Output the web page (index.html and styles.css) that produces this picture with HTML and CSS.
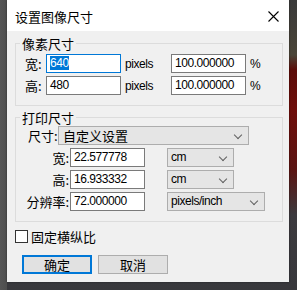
FILE: index.html
```html
<!DOCTYPE html>
<html>
<head>
<meta charset="utf-8">
<title>设置图像尺寸</title>
<link rel="stylesheet" href="styles.css">
</head>
<body>
<div class="scene">
 <div class="dialog">
  <div class="titlebar">
   <span class="title">设置图像尺寸</span>
   <svg class="close" width="11" height="11" viewBox="0 0 11 11"><path d="M0.5 0.5L10.5 10.5M10.5 0.5L0.5 10.5" stroke="#000" stroke-width="1.1"/></svg>
  </div>
  <div class="content">
   <fieldset class="group">
    <legend>像素尺寸</legend>
    <div class="row">
     <span class="lab px-lab">宽:</span>
     <div class="field focus w75"><span class="sel">640</span></div>
     <span class="unit">pixels</span>
     <div class="field w75">100.000000</div>
     <span class="pct">%</span>
    </div>
    <div class="row">
     <span class="lab px-lab">高:</span>
     <div class="field w75">480</div>
     <span class="unit">pixels</span>
     <div class="field w75">100.000000</div>
     <span class="pct">%</span>
    </div>
   </fieldset>

   <fieldset class="group print">
    <legend>打印尺寸</legend>
    <div class="row">
     <span class="lab size-lab">尺寸:</span>
     <div class="combo w190">自定义设置<span class="chev"></span></div>
    </div>
    <div class="row">
     <span class="lab pr-lab">宽:</span>
     <div class="field w74">22.577778</div>
     <div class="combo w66 gap">cm<span class="chev"></span></div>
    </div>
    <div class="row">
     <span class="lab pr-lab">高:</span>
     <div class="field w74">16.933332</div>
     <div class="combo w66 gap">cm<span class="chev"></span></div>
    </div>
    <div class="row">
     <span class="lab pr-lab">分辨率:</span>
     <div class="field w74">72.000000</div>
     <div class="combo w97 gap">pixels/inch<span class="chev"></span></div>
    </div>
   </fieldset>

   <label class="check"><span class="box"></span>固定横纵比</label>

   <div class="buttons">
    <div class="btn default">确定</div>
    <div class="btn">取消</div>
   </div>
  </div>
 </div>
</div>
</body>
</html>
```

FILE: styles.css
```css
html, body {
    margin: 0;
    padding: 0;
}
body {
    width: 297px;
    height: 290px;
    overflow: hidden;
    font-family: "Liberation Sans", "Noto Sans CJK SC", sans-serif;
    font-size: 12px;
    letter-spacing: -0.45px;
    color: #000;
    background-color: #3b3b3d;
}
.scene {
    height: 290px;
    padding-left: 7px;
    background:
        linear-gradient(to right, #555555 0, #4e4e4e 7px, transparent 7px),
        linear-gradient(to bottom, #3a3a3a 0, #4a4538 55px, #5a0c08 70px, #6e0d0a 110px, #5a1412 170px, #3c3a3e 215px, #38383c 290px);
}
.dialog {
    width: 282px;
    height: 282px;
    background-color: #f0f0f0;
    box-shadow: 0 0 2px rgba(0, 0, 0, 0.4);
}
.titlebar {
    height: 31px;
    background-color: #fff;
    display: flex;
    align-items: center;
    justify-content: space-between;
    padding: 0 10px 0 8px;
}
.title {
    font-family: "Noto Sans CJK SC", sans-serif;
    font-size: 13px;
    letter-spacing: 0;
    line-height: 14px;
    margin-top: 2px;
}
.close {
    display: block;
    margin-top: 1px;
}
.content {
    padding: 0 6px 0 8px;
}
.group {
    margin: 6px 0 0 0;
    padding: 4px 0 10px 0;
    border: 1px solid #dcdcdc;
    width: 268px;
    box-sizing: border-box;
    display: flex;
    flex-direction: column;
    gap: 3px;
}
.group legend {
    font-family: "Noto Sans CJK SC", sans-serif;
    font-size: 13px;
    letter-spacing: 0;
    line-height: 13px;
    padding: 0 2px;
    margin-left: 4px;
}
.group.print {
    margin-top: 5px;
    padding-top: 2px;
}
.row {
    display: flex;
    align-items: center;
    height: 19px;
}
.lab {
    font-family: "Noto Sans CJK SC", sans-serif;
    font-size: 13px;
    letter-spacing: 0;
    line-height: 19px;
    box-sizing: border-box;
    white-space: nowrap;
}
.px-lab {
    width: 30px;
    padding-left: 9px;
}
.size-lab {
    width: 42px;
    padding-left: 12px;
}
.pr-lab {
    width: 54px;
    text-align: right;
    padding-right: 1px;
}
.field {
    height: 19px;
    box-sizing: border-box;
    border: 1px solid #7a7a7a;
    background-color: #fff;
    padding-left: 3px;
    line-height: 17px;
    white-space: nowrap;
}
.field.focus {
    border-color: #0078d7;
}
.sel {
    background-color: #0078d7;
    color: #fff;
}
.w75 { width: 75px; }
.w74 { width: 75px; }
.unit {
    width: 50px;
    padding-left: 4px;
    box-sizing: border-box;
}
.pct {
    padding-left: 4px;
}
.combo {
    position: relative;
    height: 19px;
    box-sizing: border-box;
    border: 1px solid #adadad;
    background-color: #e5e5e5;
    padding-left: 3px;
    line-height: 17px;
}
.combo.w190 {
    width: 191px;
    font-family: "Noto Sans CJK SC", sans-serif;
    font-size: 13px;
    letter-spacing: 0;
    padding-left: 4px;
}
.w66 { width: 67px; }
.w97 { width: 98px; }
.gap { margin-left: 22px; }
.chev {
    position: absolute;
    right: 7px;
    top: 5px;
    width: 5px;
    height: 5px;
    border-right: 1px solid #606060;
    border-bottom: 1px solid #606060;
    transform: rotate(45deg);
}
.check {
    display: flex;
    align-items: center;
    margin-top: 8px;
    height: 13px;
    font-family: "Noto Sans CJK SC", sans-serif;
    font-size: 13px;
    letter-spacing: 0;
}
.box {
    width: 13px;
    height: 13px;
    box-sizing: border-box;
    border: 1px solid #333;
    background-color: #fff;
    margin-right: 3px;
}
.buttons {
    display: flex;
    gap: 6px;
    margin-top: 12px;
    padding-left: 7px;
}
.btn {
    width: 70px;
    height: 19px;
    box-sizing: border-box;
    border: 1px solid #adadad;
    background-color: #e1e1e1;
    text-align: center;
    font-family: "Noto Sans CJK SC", sans-serif;
    font-size: 13px;
    letter-spacing: 0;
    line-height: 17px;
}
.btn.default {
    border: 2px solid #0078d7;
    line-height: 15px;
}
```
